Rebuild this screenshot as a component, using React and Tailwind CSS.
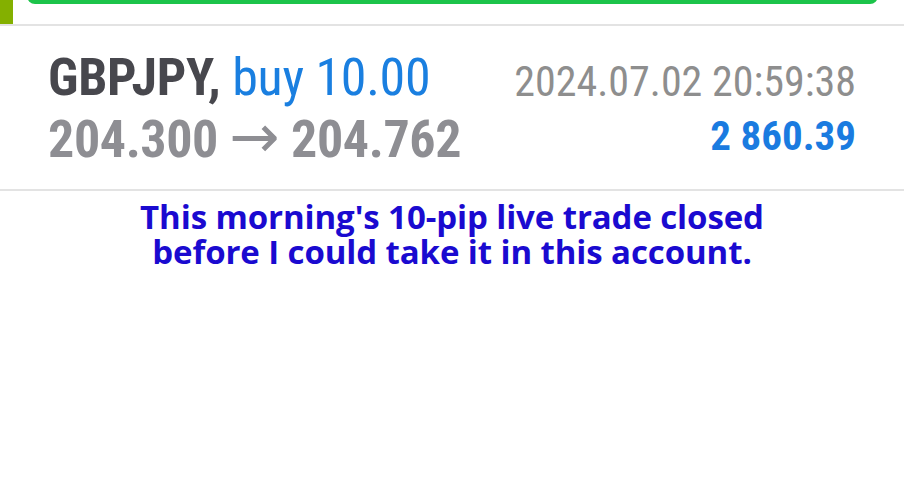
export default function App() {
  return (
    <div className="w-[904px] h-[480px] bg-white overflow-hidden" style={{ fontFamily: '"Roboto Condensed", Roboto, sans-serif' }}>
      {/* top: account tab + green button edge */}
      <div className="flex h-[24px] overflow-hidden">
        <div className="w-[13px] bg-[#84b000]" />
        <div className="flex-1">
          <div className="h-[16px] -mt-[12px] ml-[14px] mr-[26px] rounded-[14px] bg-[#1cc44a]" />
        </div>
      </div>
      <div className="h-[2px] bg-[#e3e3e3]" />

      {/* trade row */}
      <div className="flex justify-between px-[48px] h-[163px] pt-[23px]">
        <div className="leading-[57px]">
          <div className="text-[52px] font-bold text-[#47474d] tracking-[-0.3px]">
            GBPJPY, <span className="font-normal text-[#1a7fe0]">buy 10.00</span>
          </div>
          <div className="text-[52px] font-bold text-[#8e8e93] tracking-[-0.4px]">
            204.300 <span className="text-[60px] font-normal leading-none" style={{ fontFamily: '"DejaVu Sans", sans-serif' }}>→</span> 204.762
          </div>
        </div>
        <div className="flex flex-col items-end leading-[57px] pt-[4px]">
          <div className="text-[42px] text-[#8e8e8e]">2024.07.02 20:59:38</div>
          <div className="text-[41px] font-bold text-[#1a7be0] -mt-[2px]">2 860.39</div>
        </div>
      </div>
      <div className="h-[2px] bg-[#e3e3e3]" />

      {/* note */}
      <div
        className="text-center text-[33px] font-bold leading-[35px] text-[#1a0ad0] pt-[8px] tracking-[-0.1px]"
        style={{ fontFamily: '"Open Sans", "Noto Sans", sans-serif' }}
      >
        <div>This morning's 10-pip live trade closed</div>
        <div>before I could take it in this account.</div>
      </div>
    </div>
  );
}
